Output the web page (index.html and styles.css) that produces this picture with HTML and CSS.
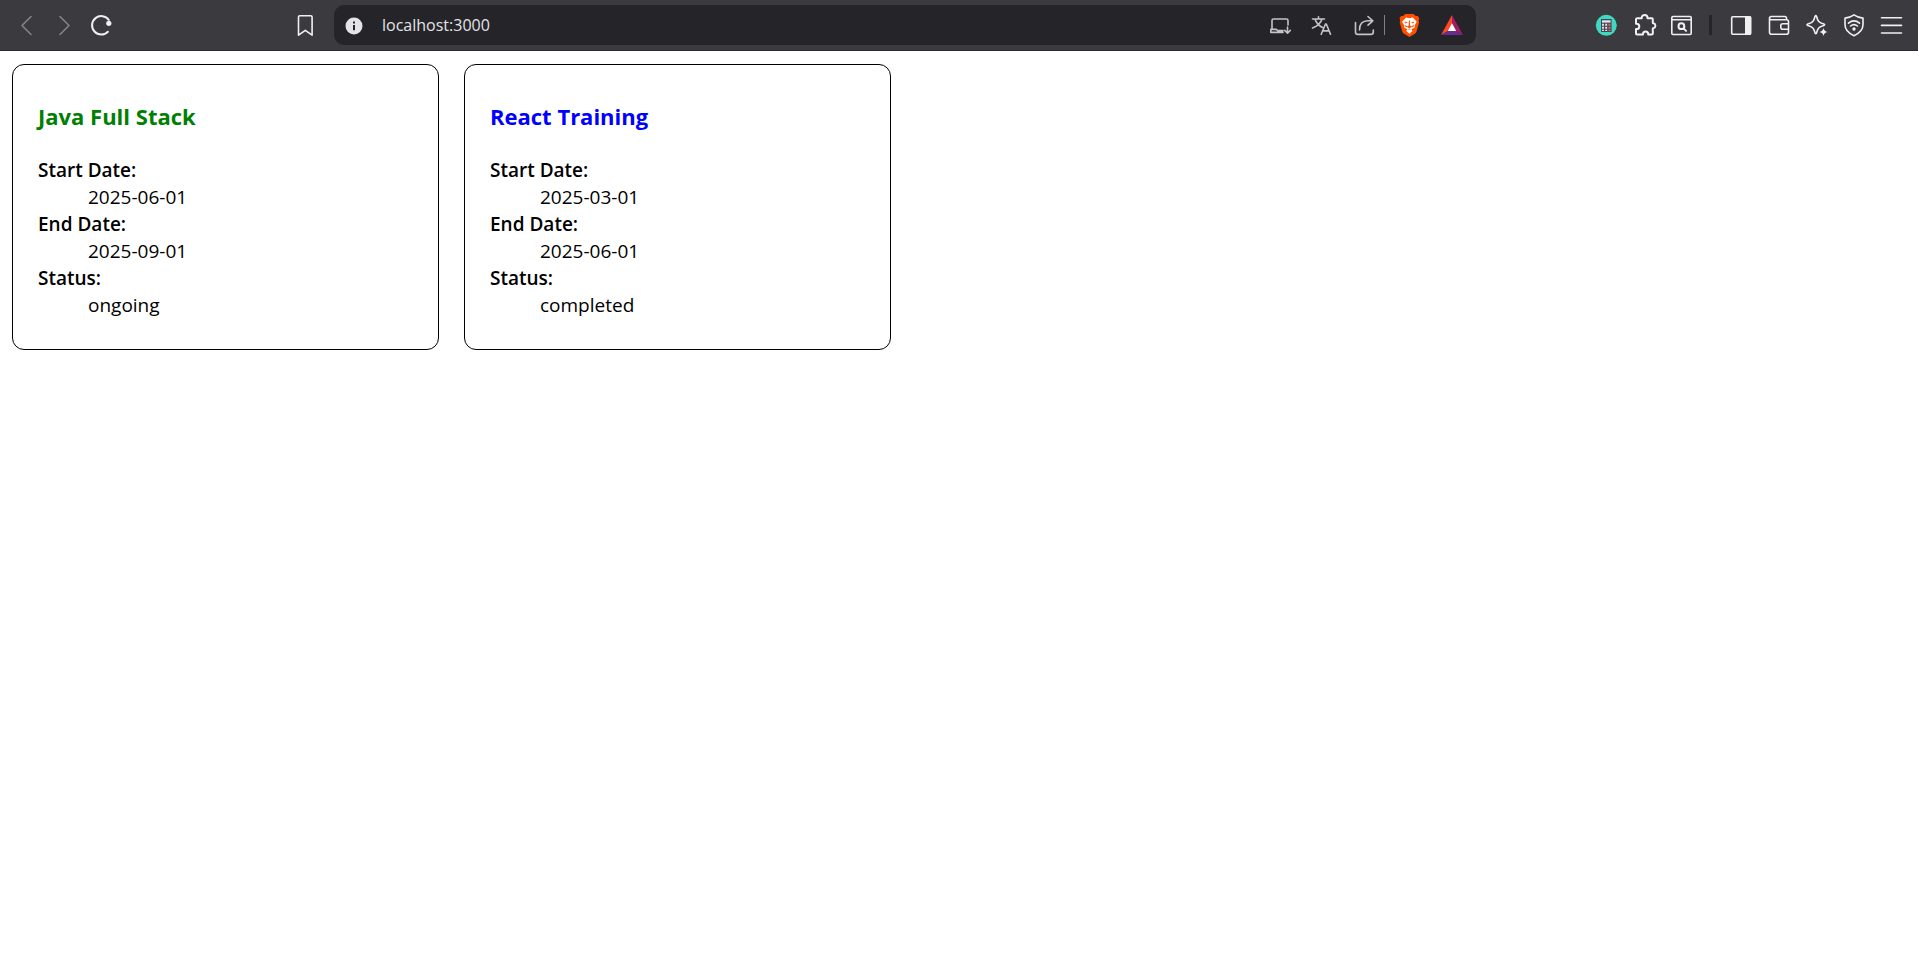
FILE: index.html
```html
<!DOCTYPE html>
<html lang="en">
<head>
<meta charset="utf-8">
<title>Cohort Details</title>
<link rel="stylesheet" href="styles.css">
</head>
<body>
<header class="toolbar">
  <nav class="nav-group" aria-label="Navigation">
    <button class="icon-btn dim" type="button" aria-label="Back"><svg viewBox="0 0 24 24"><path d="M17 3.500 8 12.500 17 21.500"/></svg></button>
    <button class="icon-btn dim" type="button" aria-label="Forward"><svg viewBox="0 0 24 24"><path d="M8 3.500 17 12.500 8 21.500"/></svg></button>
    <button class="icon-btn" type="button" aria-label="Reload"><svg viewBox="0 0 24 24"><path class="thick" d="M17.900 18.700A9.200 9.200 0 1 1 18.800 7"/><circle class="solid" cx="18.800" cy="10.300" r="2.600"/></svg></button>
    <button class="icon-btn bookmark" type="button" aria-label="Bookmark"><svg viewBox="0 0 24 24"><path d="M5.800 2.700h11q1.300 0 1.300 1.300v18.200l-6.800-4.900-6.800 4.900V4q0-1.300 1.300-1.300z"/></svg></button>
  </nav>

  <div class="address">
    <button class="icon-btn" type="button" aria-label="Site information"><svg viewBox="0 0 24 24"><circle cx="12" cy="13" r="8.500" fill="#e4e3e7" stroke="none"/><path class="info-mark" d="M12 12v5.200M12 8.400v2"/></svg></button>
    <input class="address-input" type="text" value="localhost:3000" aria-label="Address" spellcheck="false">
    <button class="icon-btn muted" type="button" aria-label="Install app"><svg viewBox="0 0 24 24"><path d="M20 12V7.500Q20 6 18.500 6h-13Q4 6 4 7.500V16M15 19.400H2.800v-3h5.700l1 1.200h5.500M19.500 14v6M16.700 17.400l2.800 2.800 2.800-2.800"/></svg></button>
    <button class="icon-btn muted" type="button" aria-label="Translate"><svg viewBox="0 0 24 24"><path d="M2.500 6h12M8.500 3.800V6M5 6q1.800 5.800 7.500 8.500M12 6q-1.800 6-9.500 9M11.200 21.300 15.500 11h.8L20.500 21.300M12.700 17.900h6.500"/></svg></button>
    <button class="icon-btn muted" type="button" aria-label="Share"><svg viewBox="0 0 24 24"><path d="M3.500 9.500V19q0 2.400 2.400 2.400h13q2.400 0 2.400-2.400v-2M7.500 17C7.500 10.800 11 7.800 16 7.800h4.500M16 3.500l4.800 4.300L16 12.200"/></svg></button>
    <div class="reward-group">
      <button class="icon-btn" type="button" aria-label="Brave Shields"><svg viewBox="0 0 24 24"><path fill="#ff5000" stroke="none" d="M7.200 1h8.400l2.100 2.100 2.100-.2 1.400 2.400-.6 2.200.5 2-2.500 8.800q-.5 1.600-1.800 2.500L11.400 24 6 20.800q-1.300-.9-1.800-2.500L1.700 9.500l.5-2-.6-2.200L3 2.900l2.100.2z"/><path fill="#fff" stroke="none" d="M8 4.600l3.400.7 3.400-.7 3.900 4.200-2 3.500.2 2-3.400 2 1 1.700-3.100 2.700L8.300 18l1-1.700-3.400-2 .2-2-2-3.500z"/><path fill="#ff5000" stroke="none" d="M6 8.700l3.700.2-1.800 1.500zM16.800 8.700l-3.700.2 1.800 1.500zM10.900 7.500h1l.2 5 1.900 1.200-2.600 1.800-2.600-1.800 1.900-1.200zM6.900 12l2.400 1.200-.2 1.100-2.600-1zM15.900 12l-2.400 1.200.2 1.100 2.600-1zM9.100 17.500l2.300-1.600 2.300 1.600-2.300-.7z"/></svg></button>
      <button class="icon-btn" type="button" aria-label="Brave Rewards"><svg viewBox="0 0 24 24"><path fill="#ff4724" stroke="none" d="M12 2 1 22l7.500-4.300L12 11z"/><path fill="#9e1f63" stroke="none" d="M12 2v9l3.500 6.700L23 22z"/><path fill="#662d91" stroke="none" d="M1 22h22l-7.500-4.300h-7z"/><path fill="#fff" stroke="none" d="M12 10.200 16.200 18H7.800z"/></svg></button>
    </div>
  </div>

  <nav class="tool-group" aria-label="Tools">
    <button class="icon-btn" type="button" aria-label="Calculator extension"><svg viewBox="0 0 24 24"><circle cx="12.300" cy="12.300" r="10.500" fill="#3fd9bd" stroke="none"/><path fill="#42445e" stroke="none" d="M7 6h10.600v13H7z"/><path fill="#e8e4ef" stroke="none" d="M8 7.300h8.600v2.300H8z"/><path stroke="#f0d9d5" stroke-width="2" stroke-dasharray="2 1" d="M9 10.700v7.300M12.200 10.700v7.300"/><path stroke="#e66758" stroke-width="2" stroke-dasharray="2 1" d="M15.500 10.700v7.300"/></svg></button>
    <button class="icon-btn" type="button" aria-label="Extensions"><svg viewBox="0 0 24 24"><path class="thick" d="M5.500 5.300h4.200V4.800a2.900 2.900 0 0 1 5.800 0v.5h4.300q1 0 1 1V10l.8.300a2.500 2.500 0 0 1 0 4.800l-.8.300v5q0 1-1 1h-3.600v-.4a2.600 2.600 0 0 0-5.200 0v.4H5q-1 0-1-1v-4.300h.6a2.700 2.700 0 0 0 0-5.400H4V6.300q0-1 1.500-1z"/></svg></button>
    <button class="icon-btn" type="button" aria-label="Search page"><svg viewBox="0 0 24 24"><path d="M3 3.500h17q1.200 0 1.200 1.200v15.600q0 1.200-1.200 1.200H3q-1.200 0-1.200-1.200V4.700q0-1.200 1.200-1.200zM2 6.800h19"/><circle cx="11.400" cy="13.200" r="2.900" class="thick"/><path class="thick" d="M13.600 15.400l2.500 2.500"/></svg></button>
    <span class="separator"></span>
    <button class="icon-btn" type="button" aria-label="Sidebar"><svg viewBox="0 0 24 24"><rect x="3.700" y="3.700" width="19" height="17.600" rx="1"/><path class="solid" d="M17 3.500h6v18H17z"/></svg></button>
    <button class="icon-btn" type="button" aria-label="Wallet"><svg viewBox="0 0 24 24"><path d="M20.500 6.700V5.200q0-1.700-1.700-1.700H5.200Q3.500 3.500 3.500 5.300v13.900q0 2 2 2h15q2 0 2-2V8.600q0-1.900-2-1.900H5.300q-1.800 0-1.800-1.400M22.500 10.800h-5.700q-2 0-2 2v1.400q0 2 2 2h5.700"/></svg></button>
    <button class="icon-btn" type="button" aria-label="Leo AI"><svg viewBox="0 0 24 24"><path d="M11.100 3.300q.7-1.400 1.400 0c1.300 5.200 2.300 6.200 7.300 7.700q1.700.8 0 1.600c-5 1.400-6 2.400-7.300 7.500q-.7 1.400-1.400 0c-1.300-5.100-2.300-6.100-7.300-7.500q-1.700-.8 0-1.600c5-1.500 6-2.500 7.300-7.700z"/><path class="solid" d="M19.500 15q.6 3.200 4 4-3.400.7-4 4-.7-3.300-4-4 3.300-.8 4-4z"/></svg></button>
    <button class="icon-btn" type="button" aria-label="VPN"><svg viewBox="0 0 24 24"><path d="M12 1.900q4.200 3 9 3.200v6.500c0 5.500-4 9-9 11.100-5-2.100-9-5.600-9-11.100V5.100q4.800-.2 9-3.200z"/><path d="M6.500 10.200q5.500-4.500 11 0M8.500 13q3.500-2.800 7 0"/><circle class="solid" cx="12" cy="16" r="1.700"/></svg></button>
    <button class="icon-btn" type="button" aria-label="Menu"><svg viewBox="0 0 24 24"><path d="M1.500 4.800h20M1.500 12.400h20M1.500 20h20"/></svg></button>
  </nav>
</header>

<main class="cards">
  <section class="card">
    <h3 class="card-title ongoing">Java Full Stack</h3>
    <dl class="details">
      <dt>Start Date:</dt><dd>2025-06-01</dd>
      <dt>End Date:</dt><dd>2025-09-01</dd>
      <dt>Status:</dt><dd>ongoing</dd>
    </dl>
  </section>
  <section class="card">
    <h3 class="card-title completed">React Training</h3>
    <dl class="details">
      <dt>Start Date:</dt><dd>2025-03-01</dd>
      <dt>End Date:</dt><dd>2025-06-01</dd>
      <dt>Status:</dt><dd>completed</dd>
    </dl>
  </section>
</main>
</body>
</html>
```
FILE: styles.css
```css
* { box-sizing: border-box; }

body {
  margin: 0;
  background: #fff;
  color: #000;
  font-family: "Open Sans", "Noto Sans", sans-serif;
  font-size: 19px;
  line-height: 27px;
}

.toolbar {
  display: grid;
  grid-template-columns: 334px 1fr 442px;
  align-items: center;
  padding: 5px 0;
  background: #3b3a3f;
  border-bottom: 1px solid #2e2b32;
}

.nav-group,
.tool-group,
.address,
.reward-group {
  display: flex;
  align-items: center;
}

.nav-group {
  gap: 14px;
  padding: 0 16px 0 14px;
}

.bookmark { margin-left: auto; }

.tool-group {
  gap: 14px;
  justify-content: flex-end;
  padding-right: 14px;
}

.icon-btn {
  flex: none;
  width: 24px;
  height: 24px;
  padding: 0;
  border: 0;
  background: none;
  color: #f0eff2;
}

.icon-btn.dim { color: #858388; }
.icon-btn.muted { color: #c4c3c8; }

.icon-btn svg {
  display: block;
  width: 24px;
  height: 24px;
  overflow: visible;
  fill: none;
  stroke: currentColor;
  stroke-width: 1.6;
  stroke-linecap: round;
  stroke-linejoin: round;
}

.icon-btn .thick { stroke-width: 2; }
.icon-btn .solid { fill: currentColor; stroke: none; }
.icon-btn .info-mark { stroke: #252429; stroke-width: 2; stroke-linecap: butt; }

.icon-btn [stroke-dasharray] { stroke-linecap: butt; }

.separator {
  width: 6px;
  height: 20px;
  border: solid #3b3a3f;
  border-width: 0 2px 0 1px;
  background: #252429;
}

.address {
  gap: 16px;
  height: 40px;
  padding: 0 12px 0 8px;
  border-radius: 10px;
  background: #252429;
}

.address-input {
  flex: 1;
  min-width: 0;
  height: 30px;
  padding: 0;
  border: 0;
  outline: 0;
  background: none;
  color: #e4e3e7;
  font-family: inherit;
  font-size: 16px;
}

.address .muted { margin-right: 2px; }

.reward-group {
  gap: 18px;
  margin-left: -10px;
  padding-left: 13px;
  height: 20px;
  border-left: 1px solid #7d8286;
}

.cards {
  display: flex;
  flex-wrap: wrap;
  align-items: flex-start;
  gap: 25px;
  padding: 13px 12px;
}

.card {
  width: 427px;
  padding: 35px 25px 30px;
  border: 1px solid #000;
  border-radius: 12px;
}

.card-title {
  margin: 0 0 25px;
  font-size: 22px;
  line-height: 32px;
  font-weight: 700;
}

.card-title.ongoing { color: green; }
.card-title.completed { color: blue; }

.details { margin: 0; }
.details dt { font-weight: 600; }
.details dd { margin: 0 0 0 50px; }
```
